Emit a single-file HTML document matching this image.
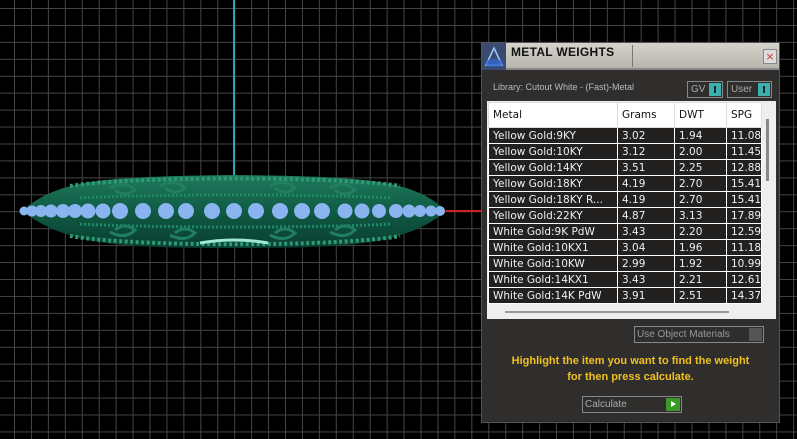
<!DOCTYPE html>
<html><head><meta charset="utf-8"><style>
*{margin:0;padding:0;box-sizing:border-box}
body{width:797px;height:439px;overflow:hidden;background:#000;position:relative;font-family:"DejaVu Sans","Liberation Sans",sans-serif}
.grid{position:absolute;left:0;top:0;width:797px;height:439px;
background-image:linear-gradient(to right,#454545 1px,transparent 1px),linear-gradient(to bottom,#454545 1px,transparent 1px);
background-size:16.95px 16.95px;background-position:14px 8px}
.vl{position:absolute;left:233px;top:0;width:2px;height:178px;background:#2aa8b0}
.rl{position:absolute;left:446px;top:210px;width:36px;height:2px;background:#d02020}
.panel{position:absolute;left:481px;top:42px;width:299px;height:381px;background:#2f2e2c;border:1px solid #555}
.title{position:absolute;left:0;top:0;width:297px;height:27px;background:linear-gradient(#d6d3cc,#b8b5ae);border-bottom:2px solid #888}
.title b{position:absolute;left:29px;top:2px;font-size:12px;font-weight:bold;color:#111;letter-spacing:.3px;font-family:"Liberation Sans",sans-serif}
.title .sep{position:absolute;left:150px;top:2px;width:1px;height:22px;background:#777}
.ico{position:absolute;left:0;top:0;width:24px;height:27px;background:#3a4a70}
.close{position:absolute;left:281px;top:6px;width:14px;height:15px;border:1px solid #888;background:#ddd;color:#c33;font-size:11px;line-height:13px;text-align:center}
.lib{position:absolute;left:11px;top:39px;font-size:9px;color:#bbb;font-family:"Liberation Sans",sans-serif}
.tog{position:absolute;top:38px;height:17px;border:1px solid #888;color:#aaa;font-size:10px;font-family:"Liberation Sans",sans-serif;line-height:15px;padding-left:3px}
.tog i{position:absolute;right:1px;top:1px;width:12px;height:13px;background:#3bb0b0}
.tog i:after{content:"";position:absolute;left:5px;top:3px;width:2px;height:7px;background:#222}
.wt{position:absolute;left:5px;top:58px;width:289px;height:218px;background:#eeeeee}
table{position:absolute;left:1px;top:1px;border-collapse:collapse;table-layout:fixed;font-size:10.5px;font-family:"DejaVu Sans",sans-serif}
td{height:16px;border:1px solid #fff;color:#f0f0f0;background:#232120;padding-left:4px;white-space:nowrap;overflow:hidden;letter-spacing:0}
tr.h td{height:25px;background:#fff;color:#111;border-color:#ddd}
.vs{position:absolute;left:279px;top:18px;width:3px;height:62px;background:#888}
.hs{position:absolute;left:18px;top:210px;width:224px;height:2px;background:#999}
.uom{position:absolute;left:152px;top:283px;width:130px;height:17px;border:1px solid #888;color:#999;font-size:10px;line-height:15px;padding-left:2px;font-family:"Liberation Sans",sans-serif}
.uom i{position:absolute;right:1px;top:1px;width:13px;height:13px;background:#555}
.msg{position:absolute;left:0;width:297px;top:310px;text-align:center;color:#f0c020;font-weight:bold;font-size:11px;line-height:16px;font-family:"Liberation Sans",sans-serif}
.calc{position:absolute;left:100px;top:353px;width:100px;height:17px;border:1px solid #888;color:#aaa;font-size:10px;line-height:15px;padding-left:2px;font-family:"Liberation Sans",sans-serif}
.calc i{position:absolute;right:1px;top:1px;width:14px;height:13px;background:#3a9a28}
.calc i:after{content:"";position:absolute;left:5px;top:3px;border-left:5px solid #fff;border-top:3.5px solid transparent;border-bottom:3.5px solid transparent}
</style></head><body>
<div class="grid"></div>
<div class="vl"></div>
<div class="rl"></div>
<svg style="position:absolute;left:0;top:0" width="480" height="439">
<defs><linearGradient id="g" x1="0" y1="0" x2="0" y2="1"><stop offset="0" stop-color="#1f7a5c"/><stop offset=".5" stop-color="#0f5a44"/><stop offset="1" stop-color="#0a3e30"/></linearGradient></defs>
<path d="M22 211 C40 195 60 188 80 184 C110 178 150 176 234 175 C320 176 360 178 390 184 C410 188 430 195 446 211 C430 225 410 233 390 238 C360 246 320 248 234 248 C150 248 110 246 80 238 C60 233 40 225 22 211 Z" fill="url(#g)"/>
<path d="M70 186 C130 176 340 176 400 186" stroke="#2d9a74" stroke-width="4" fill="none" stroke-dasharray="3 2.5"/>
<path d="M70 236 C130 247 340 247 400 236" stroke="#2d9a74" stroke-width="4" fill="none" stroke-dasharray="3 2.5"/>
<path d="M80 198 C150 194 320 194 390 198" stroke="#1e8a66" stroke-width="3" fill="none" stroke-dasharray="2 2"/>
<path d="M80 224 C150 228 320 228 390 224" stroke="#1e8a66" stroke-width="3" fill="none" stroke-dasharray="2 2"/>
<g fill="none" stroke="#227e60" stroke-width="3">
<path d="M110 188 q15 -8 25 2 q-10 8 -20 0"/><path d="M160 186 q15 -8 25 2 q-10 8 -20 0"/><path d="M270 186 q15 -8 25 2 q-10 8 -20 0"/><path d="M330 188 q15 -8 25 2 q-10 8 -20 0"/>
<path d="M110 232 q15 8 25 -2 q-10 -8 -20 0"/><path d="M170 235 q15 8 25 -2 q-10 -8 -20 0"/><path d="M270 235 q15 8 25 -2 q-10 -8 -20 0"/><path d="M330 232 q15 8 25 -2 q-10 -8 -20 0"/>
</g>
<path d="M200 243 Q234 237 268 243" stroke="#9fe8d8" stroke-width="3" fill="none"/>
<g fill="#8ab4f0">
<circle cx="24" cy="211" r="4.5"/><circle cx="32" cy="211" r="5.5"/><circle cx="41" cy="211" r="6"/><circle cx="51" cy="211" r="6.5"/><circle cx="63" cy="211" r="7"/><circle cx="75" cy="211" r="7"/><circle cx="88" cy="211" r="7.5"/><circle cx="103" cy="211" r="7.5"/><circle cx="120" cy="211" r="8"/><circle cx="143" cy="211" r="8"/><circle cx="166" cy="211" r="8"/><circle cx="186" cy="211" r="8"/><circle cx="212" cy="211" r="8"/><circle cx="234" cy="211" r="8"/><circle cx="256" cy="211" r="8"/><circle cx="280" cy="211" r="8"/><circle cx="302" cy="211" r="8"/><circle cx="322" cy="211" r="8"/><circle cx="345" cy="211" r="7.5"/><circle cx="362" cy="211" r="7.5"/><circle cx="379" cy="211" r="7"/><circle cx="396" cy="211" r="7"/><circle cx="409" cy="211" r="6.5"/><circle cx="420" cy="211" r="6"/><circle cx="431" cy="211" r="5.5"/><circle cx="440" cy="211" r="5"/></g>
</svg>
<div class="panel">
<div class="title"><div class="ico"><svg width="24" height="27"><path d="M4 22 L12 5 L20 22 Z" fill="none" stroke="#9cf" stroke-width="1.5"/><ellipse cx="12" cy="20" rx="9" ry="4" fill="#36c" opacity=".8"/></svg></div><b>METAL WEIGHTS</b><div class="sep"></div><div class="close">×</div></div>
<div class="lib">Library: Cutout White - (Fast)-Metal</div>
<div class="tog" style="left:205px;width:36px">GV<i></i></div>
<div class="tog" style="left:245px;width:45px">User<i></i></div>
<div class="wt">
<table>
<colgroup><col style="width:129px"><col style="width:57px"><col style="width:52px"><col style="width:33px"></colgroup>
<tr class="h"><td>Metal</td><td>Grams</td><td>DWT</td><td>SPG</td></tr>
<tr><td>Yellow Gold:9KY</td><td>3.02</td><td>1.94</td><td>11.08</td></tr>
<tr><td>Yellow Gold:10KY</td><td>3.12</td><td>2.00</td><td>11.45</td></tr>
<tr><td>Yellow Gold:14KY</td><td>3.51</td><td>2.25</td><td>12.88</td></tr>
<tr><td>Yellow Gold:18KY</td><td>4.19</td><td>2.70</td><td>15.41</td></tr>
<tr><td>Yellow Gold:18KY R...</td><td>4.19</td><td>2.70</td><td>15.41</td></tr>
<tr><td>Yellow Gold:22KY</td><td>4.87</td><td>3.13</td><td>17.89</td></tr>
<tr><td>White Gold:9K PdW</td><td>3.43</td><td>2.20</td><td>12.59</td></tr>
<tr><td>White Gold:10KX1</td><td>3.04</td><td>1.96</td><td>11.18</td></tr>
<tr><td>White Gold:10KW</td><td>2.99</td><td>1.92</td><td>10.99</td></tr>
<tr><td>White Gold:14KX1</td><td>3.43</td><td>2.21</td><td>12.61</td></tr>
<tr><td>White Gold:14K PdW</td><td>3.91</td><td>2.51</td><td>14.37</td></tr>
</table>
<div class="vs"></div><div class="hs"></div>
</div>
<div class="uom">Use Object Materials<i></i></div>
<div class="msg">Highlight the item you want to find the weight<br>for then press calculate.</div>
<div class="calc">Calculate<i></i></div>
</div>
</body></html>
